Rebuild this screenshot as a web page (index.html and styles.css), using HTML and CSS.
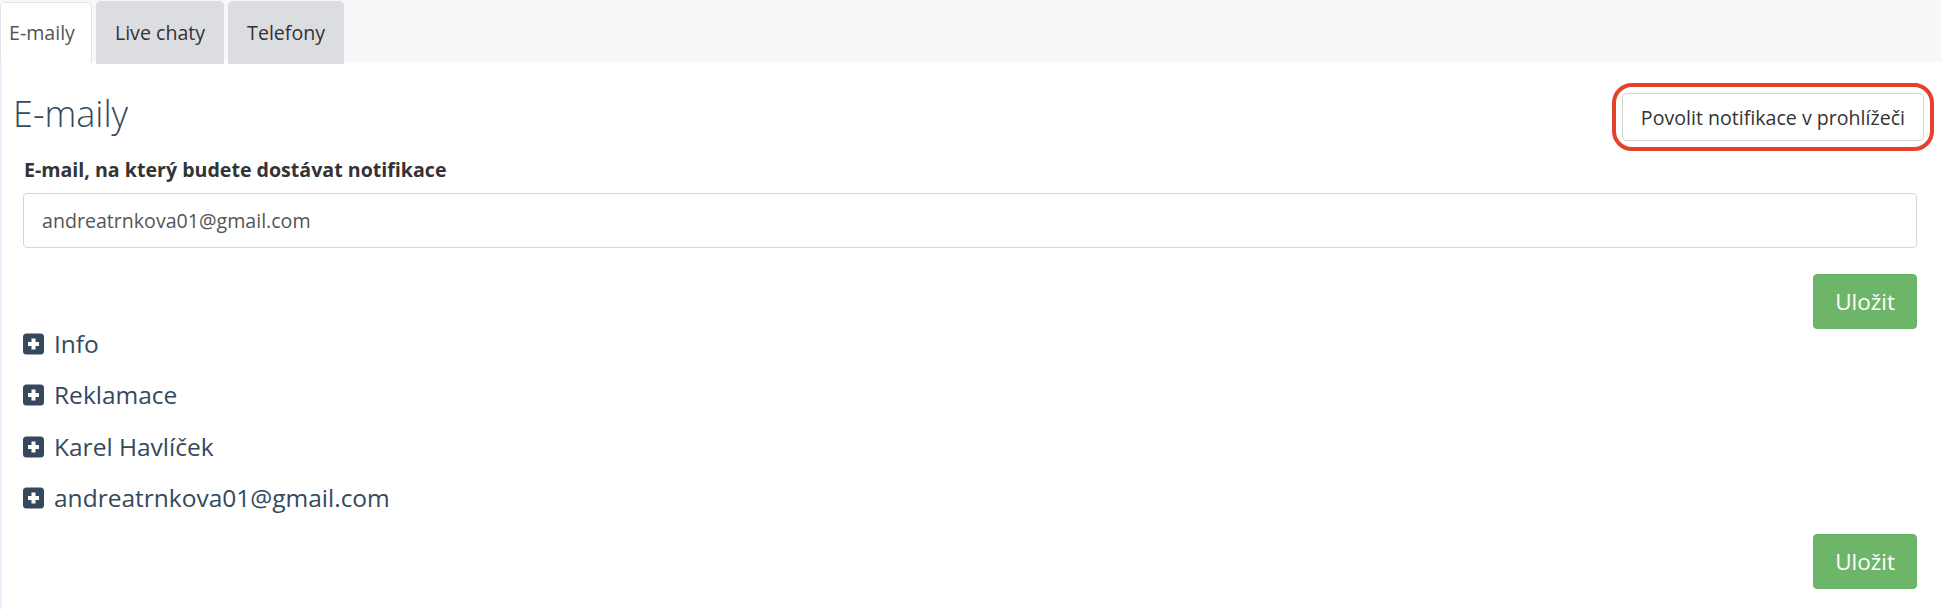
FILE: index.html
```html
<!DOCTYPE html>
<html lang="cs">
<head>
<meta charset="utf-8">
<title>E-maily</title>
<link rel="stylesheet" href="styles.css">
</head>
<body>
<nav class="tabbar">
  <div class="tab tab-active">E-maily</div>
  <div class="tab">Live chaty</div>
  <div class="tab">Telefony</div>
</nav>
<main class="content">
  <div class="header">
    <h1 class="title">E-maily</h1>
    <span class="highlight"><button class="btn-outline" type="button">Povolit notifikace v prohlížeči</button></span>
  </div>
  <div class="form">
    <label class="label" for="email">E-mail, na který budete dostávat notifikace</label>
    <input class="input" id="email" type="text" value="andreatrnkova01@gmail.com">
    <div class="actions actions-first"><button class="btn-save" type="button">Uložit</button></div>
    <ul class="groups">
      <li class="group"><svg class="plus" viewBox="0 0 21 21" width="21" height="21"><rect width="21" height="21" rx="3.5" fill="#35485c"/><path d="M8.5 5h4v3.5h3.5v4h-3.5v3.5h-4v-3.5h-3.5v-4h3.5z" fill="#fff"/></svg><span>Info</span></li>
      <li class="group"><svg class="plus" viewBox="0 0 21 21" width="21" height="21"><rect width="21" height="21" rx="3.5" fill="#35485c"/><path d="M8.5 5h4v3.5h3.5v4h-3.5v3.5h-4v-3.5h-3.5v-4h3.5z" fill="#fff"/></svg><span>Reklamace</span></li>
      <li class="group"><svg class="plus" viewBox="0 0 21 21" width="21" height="21"><rect width="21" height="21" rx="3.5" fill="#35485c"/><path d="M8.5 5h4v3.5h3.5v4h-3.5v3.5h-4v-3.5h-3.5v-4h3.5z" fill="#fff"/></svg><span>Karel Havlíček</span></li>
      <li class="group"><svg class="plus" viewBox="0 0 21 21" width="21" height="21"><rect width="21" height="21" rx="3.5" fill="#35485c"/><path d="M8.5 5h4v3.5h3.5v4h-3.5v3.5h-4v-3.5h-3.5v-4h3.5z" fill="#fff"/></svg><span>andreatrnkova01@gmail.com</span></li>
    </ul>
    <div class="actions"><button class="btn-save" type="button">Uložit</button></div>
  </div>
</main>
</body>
</html>
```

FILE: styles.css
```css
* { box-sizing: border-box; }

html, body {
  margin: 0;
  padding: 0;
  background: #ffffff;
  font-family: "Open Sans", "Noto Sans", sans-serif;
  color: #333333;
}

body { height: 609px; overflow: hidden; }

.tabbar {
  display: flex;
  align-items: flex-start;
  gap: 4px;
  height: 62px;
  background: #f7f8fa;
  padding-top: 1px;
  position: relative;
  z-index: 1;
}

.tab {
  height: 63px;
  line-height: 63px;
  padding: 0 19px;
  background: #dcdde1;
  border-radius: 5px 5px 0 0;
  font-size: 19.6px;
  color: #333333;
  white-space: nowrap;
}

.tab-active {
  margin-top: 1px;
  height: 61px;
  line-height: 60px;
  padding: 0 16px 0 8px;
  background: #ffffff;
  border: 1px solid #e2e4e8;
  border-bottom: none;
  color: #555555;
}

.content {
  border-left: 2px solid #e9f0fb;
  height: 547px;
}

.header {
  display: flex;
  justify-content: space-between;
  align-items: flex-start;
  padding: 21px 7px 0 11px;
}

.title {
  margin: 9px 0 0 0;
  font-size: 36px;
  line-height: 44px;
  font-weight: 300;
  color: #34495e;
}

.highlight {
  display: inline-flex;
  border: 4px solid #e5412b;
  border-radius: 20px;
  padding: 6px;
}

.btn-outline {
  height: 48px;
  padding: 0 18px;
  background: #ffffff;
  border: 1px solid #d4d4d4;
  border-radius: 4px;
  font-family: inherit;
  font-size: 19.6px;
  color: #333333;
}

.form {
  padding: 5px 24px 0 21px;
  display: flex;
  flex-direction: column;
}

.label {
  display: block;
  font-size: 19.6px;
  line-height: 28px;
  font-weight: 700;
  color: #333333;
  margin-bottom: 9px;
  padding-left: 1px;
}

.input {
  height: 55px;
  width: 100%;
  border: 1px solid #d6d6d6;
  border-radius: 4px;
  padding: 0 18px;
  font-family: inherit;
  font-size: 19.6px;
  color: #555555;
  outline: none;
}

.actions {
  display: flex;
  justify-content: flex-end;
}

.actions-first { margin-top: 26px; }

.btn-save {
  height: 55px;
  padding: 0 21px;
  background: #6db568;
  border: 1px solid #6ab265;
  border-radius: 4px;
  font-family: inherit;
  font-size: 22.5px;
  color: #ffffff;
}

.groups {
  list-style: none;
  margin: 0;
  padding: 0;
}

.group {
  display: flex;
  align-items: center;
  gap: 10px;
  height: 30px;
  margin-bottom: 21.3px;
  font-size: 24.5px;
  line-height: 30px;
  color: #34495e;
}

.plus {
  flex: none;
  display: block;
  width: 21px;
  height: 22px;
}
```
